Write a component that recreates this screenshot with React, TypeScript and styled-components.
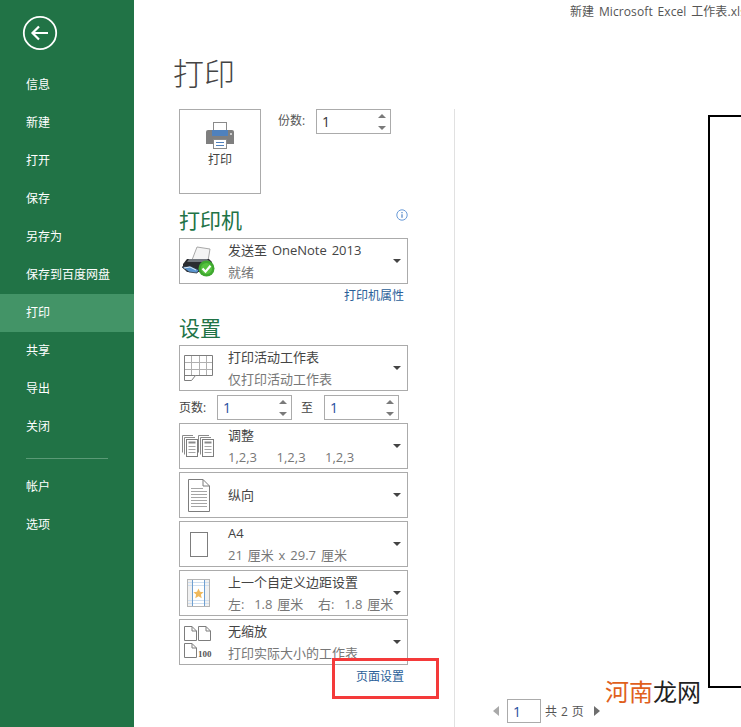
import React from "react";
import styled, { createGlobalStyle } from "styled-components";

const GlobalStyle = createGlobalStyle`
  html, body {
    margin: 0;
    padding: 0;
    background: #fff;
  }
  * {
    box-sizing: border-box;
  }
`;

const BackIcon = () => (
  <svg width="36" height="36" viewBox="0 0 36 36" fill="none" stroke="#fff">
    <circle cx="18" cy="18" r="16.2" strokeWidth="1.8" />
    <path d="M26 18H10.5M17 11.5L10.5 18L17 24.5" strokeWidth="2.2" />
  </svg>
);

const PrintIcon = () => (
  <svg width="28" height="27" viewBox="0 0 28 27">
    <path d="M2 8h24a2 2 0 0 1 2 2v12H0V10a2 2 0 0 1 2-2z" fill="#7f7f7f" />
    <rect x="7.5" y="0.5" width="13" height="10" fill="#fff" stroke="#8a8a8a" />
    <rect x="6" y="8" width="16" height="6" fill="#4f81bd" />
    <rect x="7.5" y="17.5" width="13" height="9" fill="#fff" stroke="#8a8a8a" />
    <path d="M10 20.5h8M10 23.5h8" stroke="#4f81bd" />
    <circle cx="25" cy="12" r="1" fill="#e6e6e6" />
  </svg>
);

const InfoIcon = () => (
  <svg width="12" height="12" viewBox="0 0 12 12" fill="none">
    <circle cx="6" cy="6" r="5.2" stroke="#6a9bd8" />
    <path d="M6 5.2v3.6M6 3v1.2" stroke="#3f78c0" strokeWidth="1.1" />
  </svg>
);

const PrinterOkIcon = () => (
  <svg width="33" height="31" viewBox="0 0 33 31">
    <path d="M10 14L15 1L28 3L26 15z" fill="#f4f4f4" stroke="#a8a8a8" />
    <path d="M5 13h22l3 3v7l-5 3H5l-4-4v-4z" fill="#2a2c30" />
    <path d="M7 13h18l3 3H5z" fill="#70757c" />
    <path d="M0 21l8-1 9 4-2 3-8-1z" fill="#5a95cf" stroke="#30343a" strokeWidth="0.8" />
    <path d="M2 22l6-1 6 3" fill="none" stroke="#dfeaf5" />
    <circle cx="24.5" cy="22.5" r="8" fill="#3fa82f" />
    <circle cx="24.5" cy="22.5" r="5.6" fill="#56c23f" />
    <path d="M20.5 22.5l3 3.2 5-6" fill="none" stroke="#fff" strokeWidth="2.2" />
  </svg>
);

const GridIcon = () => (
  <svg width="29" height="26" viewBox="0 0 29 26" fill="none">
    <path d="M0.5 7.5h28M0.5 14.5h28M7.5 0.5v20M15.5 0.5v20M22.5 0.5v20" stroke="#b0b0b0" />
    <path d="M0.5 0.5h28v20h-17l-4 5H0.5z" stroke="#7d7d7d" />
    <path d="M0.5 20.5h11" stroke="#7d7d7d" />
  </svg>
);

const CollateStack = ({ x }: { x: number }) => (
  <g transform={`translate(${x} 0)`}>
    <path d="M0.5 17.5V0.5H11" stroke="#8a8a8a" />
    <path d="M2.5 19.5V2.5H13" stroke="#8a8a8a" />
    <rect x="4.5" y="4.5" width="11" height="17" fill="#fff" stroke="#7d7d7d" />
    <path d="M6.5 7.5h7" stroke="#8a8a8a" strokeWidth="2" />
    <path d="M6.5 11.5h7M6.5 14.5h7M6.5 17.5h7" stroke="#a5a5a5" />
  </g>
);

const CollateIcon = () => (
  <svg width="33" height="22" viewBox="0 0 33 22" fill="none">
    <CollateStack x={0} />
    <CollateStack x={16} />
  </svg>
);

const PortraitIcon = () => (
  <svg width="22" height="33" viewBox="0 0 22 33" fill="none" stroke="#7d7d7d">
    <path d="M0.5 0.5H15L21.5 7V32.5H0.5z" />
    <path d="M15 0.5V7H21.5" />
    <path d="M3 9.5h12M3 12.5h16M3 15.5h16M3 18.5h16M3 21.5h16M3 24.5h16M3 27.5h16" stroke="#a5a5a5" />
  </svg>
);

const PaperIcon = () => (
  <svg width="18" height="25" viewBox="0 0 18 25" fill="none">
    <rect x="0.5" y="0.5" width="17" height="24" stroke="#7d7d7d" />
  </svg>
);

const MarginIcon = () => (
  <svg width="23" height="28" viewBox="0 0 23 28" fill="none">
    <rect x="0.5" y="0.5" width="22" height="27" fill="#f1f1f1" stroke="#b5b5b5" />
    <rect x="5" y="1" width="13" height="26" fill="#fff" />
    <path d="M1 3.5h21M1 6.5h21M1 21.5h21M1 24.5h21" stroke="#cfdff0" />
    <path d="M5.5 1v26M17.5 1v26" stroke="#6f9fd0" />
    <path d="M11.5 9.5l1.5 3.3 3.6.4-2.7 2.4.8 3.6-3.2-1.9-3.2 1.9.8-3.6-2.7-2.4 3.6-.4z" fill="#f0b95c" />
  </svg>
);

const NoScaleIcon = () => (
  <svg width="29" height="32" viewBox="0 0 29 32" fill="none" stroke="#7d7d7d">
    <path d="M0.5 0.5H8L12.5 5V14.5H0.5zM8 0.5V5H12.5" />
    <path d="M14.5 0.5H22L26.5 5V14.5H14.5zM22 0.5V5H26.5" />
    <path d="M0.5 17.5H8L12.5 22V31.5H0.5zM8 17.5V22H12.5" />
    <text x="14" y="31" fontFamily="Liberation Serif" fontSize="9" fontWeight="700" fill="#555" stroke="none">
      100
    </text>
  </svg>
);

const mainNav = ["信息", "新建", "打开", "保存", "另存为", "保存到百度网盘", "打印", "共享", "导出", "关闭"];
const footNav = ["帐户", "选项"];

const settings = [
  { icon: <GridIcon />, title: "打印活动工作表", sub: "仅打印活动工作表" },
  { icon: <CollateIcon />, title: "调整", sub: "1,2,3    1,2,3    1,2,3" },
  { icon: <PortraitIcon />, title: "纵向" },
  { icon: <PaperIcon />, title: "A4", sub: "21 厘米 x 29.7 厘米" },
  { icon: <MarginIcon />, title: "上一个自定义边距设置", sub: "左:  1.8 厘米   右:  1.8 厘米" },
  { icon: <NoScaleIcon />, title: "无缩放", sub: "打印实际大小的工作表" },
];

type PickerProps = { icon: React.ReactNode; title: string; sub?: string };

const Picker = ({ icon, title, sub }: PickerProps) => (
  <PickerBox>
    <IconSlot>{icon}</IconSlot>
    <PickerText>
      <PickerTitle>{title}</PickerTitle>
      {sub && <PickerSub>{sub}</PickerSub>}
    </PickerText>
    <Caret />
  </PickerBox>
);

const Spinner = ({ value, $blue }: { value: string; $blue?: boolean }) => (
  <SpinBox>
    <SpinValue $blue={$blue}>{value}</SpinValue>
    <SpinArrows>
      <SpinUp />
      <SpinDown />
    </SpinArrows>
  </SpinBox>
);

const App = () => {
  return (
    <Window>
      <GlobalStyle />
      <Sidebar>
        <BackButton>
          <BackIcon />
        </BackButton>
        <nav>
          {mainNav.map((item) => (
            <NavItem key={item} $active={item === "打印"}>
              {item}
            </NavItem>
          ))}
        </nav>
        <NavDivider />
        <nav>
          {footNav.map((item) => (
            <NavItem key={item}>{item}</NavItem>
          ))}
        </nav>
      </Sidebar>

      <Main>
        <TitleBar>新建 Microsoft Excel 工作表.xlsx</TitleBar>
        <PageTitle>打印</PageTitle>
        <Body>
          <Panel>
            <TopRow>
              <PrintButton>
                <PrintIcon />
                <span>打印</span>
              </PrintButton>
              <Copies>
                <FieldLabel>份数:</FieldLabel>
                <Spinner value="1" />
              </Copies>
            </TopRow>

            <SectionHead>
              打印机
              <InfoSlot>
                <InfoIcon />
              </InfoSlot>
            </SectionHead>
            <Picker icon={<PrinterOkIcon />} title="发送至 OneNote 2013" sub="就绪" />
            <LinkRow>打印机属性</LinkRow>

            <SettingsHead>设置</SettingsHead>
            <Picker {...settings[0]} />
            <PagesRow>
              <PagesLabel>页数:</PagesLabel>
              <Spinner value="1" $blue />
              <ToLabel>至</ToLabel>
              <Spinner value="1" $blue />
            </PagesRow>
            <PickerStack>
              {settings.slice(1).map((s) => (
                <Picker key={s.title} {...s} />
              ))}
            </PickerStack>
            <LinkRow>页面设置</LinkRow>
          </Panel>

          <Preview>
            <Sheet />
            <Pager>
              <PrevArrow />
              <PageInput>1</PageInput>
              <PageCount>共 2 页</PageCount>
              <NextArrow />
            </Pager>
          </Preview>
        </Body>
      </Main>

      <Watermark>
        <em>河南</em>龙网
      </Watermark>
      <Highlight />
    </Window>
  );
};

const Window = styled.div`
  position: relative;
  display: flex;
  width: 741px;
  height: 727px;
  overflow: hidden;
  background: #fff;
  color: #444;
  font-family: "Open Sans", "Noto Sans CJK SC", sans-serif;
`;

const Sidebar = styled.aside`
  flex: 0 0 134px;
  padding-top: 15px;
  background: #217346;
  color: #fff;
`;

const BackButton = styled.div`
  display: flex;
  height: 36px;
  margin: 0 0 15px 22px;
`;

const NavItem = styled.div<{ $active?: boolean }>`
  height: 38px;
  padding-left: 26px;
  line-height: 38px;
  font-size: 12px;
  background: ${(p) => (p.$active ? "#439467" : "transparent")};
`;

const NavDivider = styled.div`
  width: 82px;
  height: 1px;
  margin: 12px 0 9px 26px;
  background: #5a9a76;
`;

const Main = styled.main`
  flex: 1;
  min-width: 0;
  display: flex;
  flex-direction: column;
`;

const TitleBar = styled.div`
  height: 24px;
  padding-left: 436px;
  line-height: 24px;
  font-size: 12px;
  letter-spacing: 0.1px;
  word-spacing: 1.5px;
  color: #555;
  white-space: nowrap;
`;

const PageTitle = styled.h1`
  margin: 0;
  padding: 31px 0 18px 39px;
  line-height: 36px;
  font-size: 31px;
  font-weight: 300;
  color: #444;
`;

const Body = styled.div`
  flex: 1;
  display: flex;
  min-height: 0;
`;

const Panel = styled.section`
  flex: 0 0 321px;
  padding-left: 45px;
  border-right: 1px solid #e1e1e1;
`;

const TopRow = styled.div`
  display: flex;
  height: 85px;
`;

const PrintButton = styled.div`
  width: 82px;
  height: 85px;
  display: flex;
  flex-direction: column;
  align-items: center;
  padding-top: 12px;
  border: 1px solid #ababab;
  font-size: 12px;
  color: #444;

  span {
    margin-top: 2px;
    line-height: 18px;
  }
`;

const Copies = styled.div`
  display: flex;
  align-items: flex-start;
  margin-left: 17px;
  gap: 10px;
`;

const FieldLabel = styled.span`
  width: 28px;
  line-height: 24px;
  font-size: 12px;
  color: #555;
  white-space: nowrap;
`;

const SectionHead = styled.h2`
  display: flex;
  justify-content: space-between;
  width: 229px;
  height: 28px;
  margin: 13px 0 3px;
  line-height: 26px;
  font-size: 21px;
  font-weight: 400;
  color: #217346;
`;

const SettingsHead = styled(SectionHead)`
  margin: 7px 0 2px;
`;

const InfoSlot = styled.span`
  display: flex;
  margin-top: 2px;
`;

const LinkRow = styled.div`
  width: 229px;
  padding-right: 4px;
  line-height: 24px;
  font-size: 12px;
  text-align: right;
  color: #2a6099;
`;

const PickerStack = styled.div`
  display: flex;
  flex-direction: column;
  gap: 3px;
  margin-top: 3px;
`;

const PickerBox = styled.div`
  display: flex;
  align-items: center;
  width: 229px;
  height: 46px;
  padding: 0 6px 0 0;
  border: 1px solid #ababab;
`;

const IconSlot = styled.div`
  flex: 0 0 37px;
  display: flex;
  justify-content: center;
  margin-right: 11px;
`;

const PickerText = styled.div`
  flex: 1;
  min-width: 0;
  white-space: pre;
  word-spacing: 1.5px;
`;

const PickerTitle = styled.div`
  line-height: 22px;
  font-size: 13px;
  color: #444;
`;

const PickerSub = styled.div`
  line-height: 22px;
  font-size: 13px;
  color: #777;
`;

const Caret = styled.span`
  flex: none;
  width: 0;
  height: 0;
  border-style: solid;
  border-width: 4px 4px 0;
  border-color: #444 transparent transparent;
`;

const PagesRow = styled.div`
  display: flex;
  align-items: center;
  width: 220px;
  height: 25px;
  margin-top: 4px;
`;

const PagesLabel = styled.span`
  width: 38px;
  padding-bottom: 2px;
  font-size: 12px;
  color: #444;
  white-space: nowrap;
`;

const ToLabel = styled.span`
  width: 32px;
  padding-bottom: 2px;
  padding-right: 2px;
  text-align: center;
  font-size: 12px;
  color: #444;
`;

const SpinBox = styled.div`
  flex: none;
  display: flex;
  align-items: center;
  justify-content: space-between;
  width: 75px;
  height: 25px;
  padding: 0 4px 0 5px;
  border: 1px solid #ababab;
  background: #fff;
`;

const SpinValue = styled.span<{ $blue?: boolean }>`
  font-size: 14px;
  color: ${(p) => (p.$blue ? "#1f4e9e" : "#333")};
`;

const SpinArrows = styled.span`
  display: flex;
  flex-direction: column;
  gap: 8px;
`;

const SpinUp = styled.i`
  width: 0;
  height: 0;
  border-style: solid;
  border-width: 0 4px 4px;
  border-color: transparent transparent #7a7a7a;
`;

const SpinDown = styled.i`
  width: 0;
  height: 0;
  border-style: solid;
  border-width: 4px 4px 0;
  border-color: #7a7a7a transparent transparent;
`;

const Preview = styled.section`
  flex: 1;
  min-width: 0;
`;

const Sheet = styled.div`
  width: 60px;
  height: 573px;
  margin: 6px 0 0 253px;
  border: 2px solid #000;
  border-right: 0;
`;

const Pager = styled.div`
  display: flex;
  align-items: center;
  height: 24px;
  margin-top: 11px;
  padding-left: 38px;
`;

const PrevArrow = styled.i`
  width: 0;
  height: 0;
  margin-right: 8px;
  border-style: solid;
  border-width: 5px 6px 5px 0;
  border-color: transparent #a9a9a9 transparent transparent;
`;

const NextArrow = styled.i`
  width: 0;
  height: 0;
  margin-left: 10px;
  border-style: solid;
  border-width: 5px 0 5px 6px;
  border-color: transparent transparent transparent #6e6e6e;
`;

const PageInput = styled.div`
  width: 34px;
  height: 24px;
  padding-left: 5px;
  border: 1px solid #ababab;
  line-height: 23px;
  font-size: 14px;
  color: #1f4e9e;
`;

const PageCount = styled.span`
  margin-left: 4px;
  font-size: 12px;
  letter-spacing: 0.4px;
  color: #555;
  white-space: nowrap;
`;

const Watermark = styled.div`
  position: absolute;
  left: 605px;
  top: 677px;
  line-height: 30px;
  font-size: 24px;
  color: #222;

  em {
    font-style: normal;
    color: #e0601c;
  }
`;

const Highlight = styled.div`
  position: absolute;
  left: 332px;
  top: 658px;
  width: 107px;
  height: 41px;
  border: 3px solid #f43a3a;
`;

export default App;
